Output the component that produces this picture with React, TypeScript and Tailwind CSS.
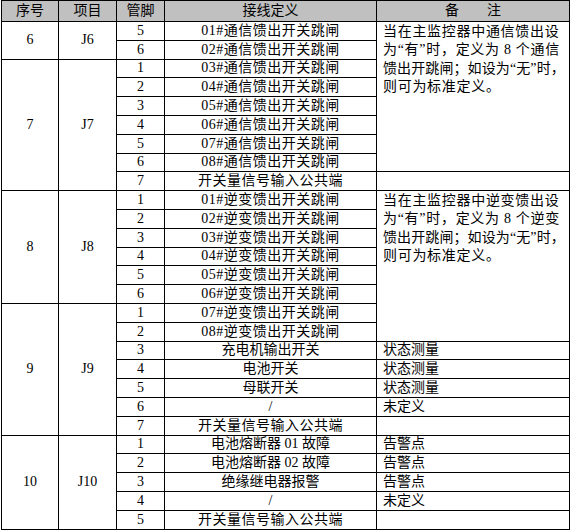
type Row = { pin: string; def: string; wide?: boolean; note?: string; noteSpan?: number; skipNote?: boolean };
type Group = { no: string; item: string; rows: Row[] };

const noteA = ["当在主监控器中通信馈出设", "为“有”时，定义为 8 个通信", "馈出开跳闸；如设为“无”时，", "则可为标准定义。"];
const noteB = ["当在主监控器中逆变馈出设", "为“有”时，定义为 8 个逆变", "馈出开跳闸；如设为“无”时，", "则可为标准定义。"];

const groups: Group[] = [
  {
    no: "6",
    item: "J6",
    rows: [
      { pin: "5", def: "01#通信馈出开关跳闸", wide: true, noteSpan: 8 },
      { pin: "6", def: "02#通信馈出开关跳闸", wide: true, skipNote: true },
    ],
  },
  {
    no: "7",
    item: "J7",
    rows: [
      { pin: "1", def: "03#通信馈出开关跳闸", wide: true, skipNote: true },
      { pin: "2", def: "04#通信馈出开关跳闸", wide: true, skipNote: true },
      { pin: "3", def: "05#通信馈出开关跳闸", wide: true, skipNote: true },
      { pin: "4", def: "06#通信馈出开关跳闸", wide: true, skipNote: true },
      { pin: "5", def: "07#通信馈出开关跳闸", wide: true, skipNote: true },
      { pin: "6", def: "08#通信馈出开关跳闸", wide: true, skipNote: true },
      { pin: "7", def: "开关量信号输入公共端", wide: true, note: "" },
    ],
  },
  {
    no: "8",
    item: "J8",
    rows: [
      { pin: "1", def: "01#逆变馈出开关跳闸", wide: true, noteSpan: 8 },
      { pin: "2", def: "02#逆变馈出开关跳闸", wide: true, skipNote: true },
      { pin: "3", def: "03#逆变馈出开关跳闸", wide: true, skipNote: true },
      { pin: "4", def: "04#逆变馈出开关跳闸", wide: true, skipNote: true },
      { pin: "5", def: "05#逆变馈出开关跳闸", wide: true, skipNote: true },
      { pin: "6", def: "06#逆变馈出开关跳闸", wide: true, skipNote: true },
    ],
  },
  {
    no: "9",
    item: "J9",
    rows: [
      { pin: "1", def: "07#逆变馈出开关跳闸", wide: true, skipNote: true },
      { pin: "2", def: "08#逆变馈出开关跳闸", wide: true, skipNote: true },
      { pin: "3", def: "充电机输出开关", note: "状态测量" },
      { pin: "4", def: "电池开关", note: "状态测量" },
      { pin: "5", def: "母联开关", note: "状态测量" },
      { pin: "6", def: "/", note: "未定义" },
      { pin: "7", def: "开关量信号输入公共端", wide: true, note: "" },
    ],
  },
  {
    no: "10",
    item: "J10",
    rows: [
      { pin: "1", def: "电池熔断器 01 故障", note: "告警点" },
      { pin: "2", def: "电池熔断器 02 故障", note: "告警点" },
      { pin: "3", def: "绝缘继电器报警", note: "告警点" },
      { pin: "4", def: "/", note: "未定义" },
      { pin: "5", def: "开关量信号输入公共端", wide: true, note: "" },
    ],
  },
];

const cell = "border border-black p-0 leading-none font-normal";

export default function App() {
  let block = 0;
  return (
    <div
      className="bg-white w-[571px] h-[531px] pl-px text-[14px] text-black"
      style={{ fontFamily: '"Liberation Serif", "Noto Sans CJK SC", serif' }}
    >
      <table className="table-fixed border-collapse w-[568px]">
        <colgroup>
          <col className="w-[57px]" />
          <col className="w-[58px]" />
          <col className="w-[48px]" />
          <col className="w-[212px]" />
          <col className="w-[193px]" />
        </colgroup>
        <tbody>
          <tr className="h-[21px] bg-[#c0c0c0]">
            <td className={`${cell} text-center`}>序号</td>
            <td className={`${cell} text-center`}>项目</td>
            <td className={`${cell} text-center`}>管脚</td>
            <td className={`${cell} text-center`}>接线定义</td>
            <td className={`${cell} text-center`}>备　　注</td>
          </tr>
          {groups.map((g) =>
            g.rows.map((r, i) => {
              const lines = r.noteSpan ? (block++ === 0 ? noteA : noteB) : null;
              return (
                <tr key={g.no + "-" + i} className="h-[18.8px]">
                  {i === 0 && (
                    <>
                      <td rowSpan={g.rows.length} className={`${cell} text-center align-middle`}>
                        {g.no}
                      </td>
                      <td rowSpan={g.rows.length} className={`${cell} text-center align-middle`}>
                        {g.item}
                      </td>
                    </>
                  )}
                  <td className={`${cell} text-center`}>{r.pin}</td>
                  <td className={`${cell} text-center whitespace-nowrap ${r.wide ? "tracking-[0.5px]" : ""}`}>
                    {r.def}
                  </td>
                  {lines && (
                    <td rowSpan={r.noteSpan} className={`${cell} align-top pl-[6px] pt-[1px]`}>
                      {lines.map((l, k) => (
                        <div
                          key={l}
                          className={`leading-[18.3px] whitespace-nowrap ${k === 2 ? "tracking-[0.1px]" : "tracking-[0.7px]"}`}
                        >
                          {l}
                        </div>
                      ))}
                    </td>
                  )}
                  {!lines && !r.skipNote && (
                    <td className={`${cell} pl-[6px] text-left whitespace-nowrap`}>{r.note}</td>
                  )}
                </tr>
              );
            })
          )}
        </tbody>
      </table>
    </div>
  );
}
